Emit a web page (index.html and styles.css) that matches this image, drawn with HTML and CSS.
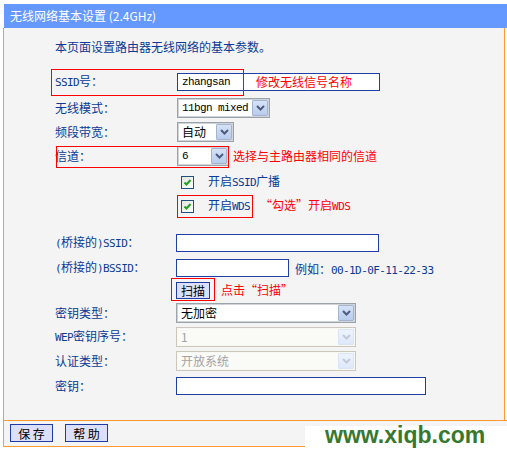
FILE: index.html
```html
<!DOCTYPE html>
<html lang="zh-CN">
<head>
<meta charset="utf-8">
<title>无线网络基本设置</title>
<link rel="stylesheet" href="styles.css">
</head>
<body>
<div class="page">
  <div class="title">无线网络基本设置 (2.4GHz)</div>
  <div class="panel">
    <p class="intro">本页面设置路由器无线网络的基本参数。</p>

    <div class="row gap13">
      <span class="mark mark-ssid"></span>
      <span class="label"><span class="hw">SSID</span>号：</span>
      <div class="input w203"><span class="mono ssid-val">zhangsan</span><span class="note">修改无线信号名称</span></div>
    </div>

    <div class="row gap2">
      <span class="label">无线模式：</span>
      <div class="select w93"><span class="val mono">11bgn mixed</span><span class="arrow"><svg width="9" height="6" viewBox="0 0 9 6"><polyline points="1,1 4.5,4.5 8,1" fill="none" stroke="#4a5d80" stroke-width="2"/></svg></span></div>
    </div>

    <div class="row">
      <span class="label">频段带宽：</span>
      <div class="select w57"><span class="val dark">自动</span><span class="arrow"><svg width="9" height="6" viewBox="0 0 9 6"><polyline points="1,1 4.5,4.5 8,1" fill="none" stroke="#4a5d80" stroke-width="2"/></svg></span></div>
    </div>

    <div class="row">
      <span class="mark mark-channel"></span>
      <span class="label">信道：</span>
      <div class="select w52"><span class="val mono">6</span><span class="arrow"><svg width="9" height="6" viewBox="0 0 9 6"><polyline points="1,1 4.5,4.5 8,1" fill="none" stroke="#4a5d80" stroke-width="2"/></svg></span></div>
      <span class="note note-ch">选择与主路由器相同的信道</span>
    </div>

    <div class="row gap2">
      <span class="label"></span>
      <span class="check"><svg width="11" height="11" viewBox="0 0 11 11"><polyline points="2.5,5.5 4.5,7.5 8.5,3" fill="none" stroke="#21a021" stroke-width="2"/></svg></span>
      <span class="check-text">开启<span class="hw">SSID</span>广播</span>
    </div>

    <div class="row">
      <span class="label"></span>
      <span class="mark mark-wds"></span>
      <span class="check"><svg width="11" height="11" viewBox="0 0 11 11"><polyline points="2.5,5.5 4.5,7.5 8.5,3" fill="none" stroke="#21a021" stroke-width="2"/></svg></span>
      <span class="check-text">开启<span class="hw">WDS</span></span>
      <span class="note note-wds">“勾选”开启<span class="hw">WDS</span></span>
    </div>

    <div class="row lower gap13">
      <span class="label"><span class="hw">(</span>桥接的<span class="hw">)SSID</span>：</span>
      <div class="input w203"></div>
    </div>

    <div class="row lower gap1">
      <span class="label"><span class="hw">(</span>桥接的<span class="hw">)BSSID</span>：</span>
      <div class="input w113"></div>
      <span class="hint">例如：<span class="hw">00-1D-0F-11-22-33</span></span>
    </div>

    <div class="row lower short">
      <span class="label"></span>
      <span class="mark mark-scan"></span>
      <button class="btn scan">扫描</button>
      <span class="note note-scan">点击“扫描”</span>
    </div>

    <div class="row lower gap1">
      <span class="label">密钥类型：</span>
      <div class="select w180"><span class="val dark">无加密</span><span class="arrow"><svg width="9" height="6" viewBox="0 0 9 6"><polyline points="1,1 4.5,4.5 8,1" fill="none" stroke="#4a5d80" stroke-width="2"/></svg></span></div>
    </div>

    <div class="row lower">
      <span class="label"><span class="hw">WEP</span>密钥序号：</span>
      <div class="select w180 disabled"><span class="val">1</span><span class="arrow"><svg width="9" height="6" viewBox="0 0 9 6"><polyline points="1,1 4.5,4.5 8,1" fill="none" stroke="#c3cbd8" stroke-width="2"/></svg></span></div>
    </div>

    <div class="row lower">
      <span class="label">认证类型：</span>
      <div class="select w180 disabled"><span class="val">开放系统</span><span class="arrow"><svg width="9" height="6" viewBox="0 0 9 6"><polyline points="1,1 4.5,4.5 8,1" fill="none" stroke="#c3cbd8" stroke-width="2"/></svg></span></div>
    </div>

    <div class="row lower gap1">
      <span class="label">密钥：</span>
      <div class="input w250"></div>
    </div>
  </div>
  <div class="footer">
    <button class="btn foot">保 存</button>
    <button class="btn foot">帮 助</button>
  </div>
</div>
<div class="watermark">www.xiqb.com</div>
</body>
</html>
```

FILE: styles.css
```css
* {
  box-sizing: border-box;
  margin: 0;
  padding: 0;
}

body {
  margin: 0;
  width: 507px;
  height: 449px;
  overflow: hidden;
  position: relative;
  background: #ffffff;
  font-family: "Noto Sans CJK SC", "Liberation Sans", sans-serif;
  font-size: 12px;
  color: #0b3a95;
}

.page {
  padding: 4px 0 0 3px;
}

.title {
  margin-left: 1px;
  height: 24px;
  line-height: 23px;
  padding-left: 6px;
  background: #6699ff;
  color: #ffffff;
  font-size: 12px;
}

.panel {
  width: 502px;
  border-left: 1px solid #ff9933;
  border-right: 1px solid #ff9933;
  background: #f4f4f4;
  padding: 9px 0 22px 51px;
}

.intro {
  height: 20px;
  line-height: 20px;
}

.row {
  position: relative;
  display: flex;
  align-items: center;
  height: 24px;
}

.row.short {
  height: 20px;
}

.gap1 { margin-top: 1px; }
.gap2 { margin-top: 2px; }
.gap13 { margin-top: 13px; }

.label {
  flex: none;
  width: 122px;
  line-height: 16px;
  white-space: nowrap;
}

.row.lower .label {
  width: 121px;
}

/* half-width latin characters, 6px advance */
.hw {
  font-family: "DejaVu Sans Mono", monospace;
  font-size: 11px;
  letter-spacing: -0.6px;
}

.mono {
  font-family: "Liberation Mono", monospace;
  font-size: 11px;
  letter-spacing: -0.6px;
  color: #000000;
}

.dark {
  color: #000000;
}

.note {
  color: #ff0000;
  white-space: nowrap;
  line-height: 16px;
}

.note-ch { margin-left: 4px; }
.note-wds { margin-left: 10px; }
.note-scan { margin-left: 11px; }

.hint {
  margin-left: 6px;
  white-space: nowrap;
}

/* text inputs */
.input {
  flex: none;
  display: flex;
  align-items: center;
  height: 18px;
  border: 1px solid #1f3fa6;
  background: #ffffff;
  padding-left: 4px;
}

.ssid-val {
  width: 74px;
}

.w203 { width: 203px; }
.w113 { width: 113px; }
.w250 { width: 250px; }

/* selects */
.select {
  flex: none;
  display: flex;
  align-items: center;
  height: 20px;
  border: 1px solid #9aa2aa;
  box-shadow: inset 0 0 0 1px #d0d4d8;
  background: #ffffff;
  padding: 1px;
}

.w93 { width: 93px; }
.w57 { width: 57px; }
.w52 { width: 52px; }
.w180 { width: 180px; }

.select .val {
  flex: 1;
  padding-left: 3px;
  line-height: 16px;
  white-space: nowrap;
  overflow: hidden;
}

.arrow {
  flex: none;
  width: 16px;
  height: 16px;
  display: flex;
  align-items: center;
  justify-content: center;
  border: 1px solid #a4b4d0;
  border-radius: 1px;
  background: linear-gradient(#d6e2f6, #b8cced);
}

.select.disabled {
  border-color: #cbc8bb;
  box-shadow: none;
  background: #f7f7f3;
}

.select.disabled .val {
  color: #a3a3a3;
  background: #fafaf7;
}

.select.disabled .arrow {
  border-color: #dbe4f4;
  background: linear-gradient(#eef3fd, #dde8fa);
}

/* checkboxes */
.check {
  flex: none;
  width: 13px;
  height: 13px;
  margin-left: 4px;
  border: 1px solid #1c5180;
  background: linear-gradient(135deg, #e4e4de, #ffffff);
  display: flex;
  align-items: center;
  justify-content: center;
}

.check-text {
  margin-left: 14px;
  white-space: nowrap;
  line-height: 16px;
}

/* red annotation boxes */
.mark {
  position: absolute;
  border: 1px solid #ff0000;
  pointer-events: none;
}

.mark-ssid {
  left: -4px;
  top: -1px;
  width: 193px;
  height: 27px;
}

.mark-channel {
  left: 1px;
  top: 2px;
  width: 173px;
  height: 22px;
}

.mark-wds {
  left: 122px;
  top: 1px;
  width: 76px;
  height: 23px;
}

.mark-scan {
  left: 116px;
  top: -2px;
  width: 44px;
  height: 23px;
}

/* buttons */
.btn {
  flex: none;
  font-family: "Noto Sans CJK SC", sans-serif;
  font-size: 12px;
  color: #000000;
  background: #dcdffa;
  border: 1px solid #1e3ca2;
  line-height: 15px;
}

.scan {
  width: 34px;
  height: 17px;
}

.footer {
  display: flex;
  gap: 12px;
  height: 27px;
  border-top: 1px solid #ff9933;
  border-bottom: 1px solid #ff9933;
  border-left: 1px solid #ff9933;
  background: #f4f4f4;
  padding: 3px 0 0 6px;
}

.foot {
  width: 43px;
  height: 18px;
}

.watermark {
  position: absolute;
  left: 305px;
  top: 426px;
  width: 202px;
  height: 23px;
  padding-left: 20px;
  background: #ffffff;
  color: #37782f;
  font-family: "Liberation Sans", sans-serif;
  font-weight: bold;
  font-size: 23px;
  line-height: 19px;
  white-space: nowrap;
}
```
